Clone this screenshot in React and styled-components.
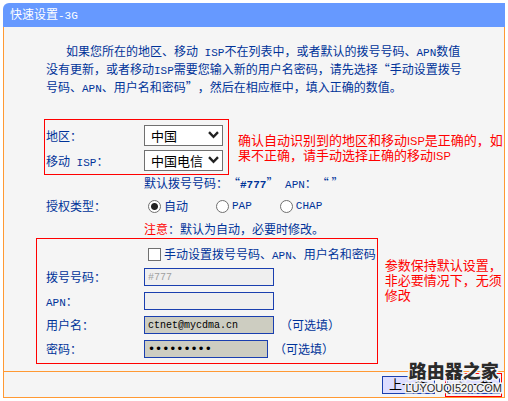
import React from "react";
import styled, { createGlobalStyle } from "styled-components";

function App() {
  return (
    <Panel lang="zh-CN">
      <GlobalStyle />
      <Header>
        快速设置<Latin>-3G</Latin>
      </Header>
      <Content>
        <Intro>
          如果您所在的地区、移动<Latin> ISP</Latin>
          不在列表中，或者默认的拨号号码、<Latin>APN</Latin>
          数值没有更新，或者移动<Latin>ISP</Latin>
          需要您输入新的用户名密码，请先选择“手动设置拨号号码、
          <Latin>APN</Latin>、用户名和密码”，然后在相应框中，填入正确的数值。
        </Intro>

        <Section>
          <RegionBox>
            <Row>
              <Label htmlFor="region">地区：</Label>
              <Dropdown id="region" options={["中国"]} />
            </Row>
            <Row>
              <Label htmlFor="isp">
                移动<Latin> ISP</Latin>：
              </Label>
              <Dropdown id="isp" options={["中国电信"]} />
            </Row>
          </RegionBox>
          <RegionNote>
            确认自动识别到的地区和移动<NoteLatin>ISP</NoteLatin>
            是正确的，如果不正确，请手动选择正确的移动<NoteLatin>ISP</NoteLatin>
          </RegionNote>
        </Section>

        <AuthRows>
          <Row>
            <Label as="span" />
            <Line>
              默认拨号号码：“
              <Latin as="b">#777</Latin>”<Latin> APN</Latin>：“ ”
            </Line>
          </Row>
          <Row role="radiogroup" aria-labelledby="auth">
            <Label as="span" id="auth">
              授权类型：
            </Label>
            <Choices>
              <Choice>
                <Radio name="auth" defaultChecked />
                <span>自动</span>
              </Choice>
              <Choice>
                <Radio name="auth" />
                <Latin>PAP</Latin>
              </Choice>
              <Choice>
                <Radio name="auth" />
                <Latin>CHAP</Latin>
              </Choice>
            </Choices>
          </Row>
          <Row>
            <Label as="span" />
            <Line>
              <Warn>注意</Warn>：默认为自动，必要时修改。
            </Line>
          </Row>
        </AuthRows>

        <Section>
          <DialBox>
            <Row>
              <Label as="span" />
              <Choices>
                <Choice>
                  <Checkbox />
                  <span>
                    手动设置拨号号码、<Latin>APN</Latin>、用户名和密码
                  </span>
                </Choice>
              </Choices>
            </Row>
            <Row>
              <Label htmlFor="dial">拨号号码：</Label>
              <TextInput id="dial" defaultValue="#777" disabled />
            </Row>
            <Row>
              <Label htmlFor="apn">
                <Latin>APN</Latin>：
              </Label>
              <TextInput id="apn" disabled />
            </Row>
            <Row>
              <Label htmlFor="user">用户名：</Label>
              <TextInput id="user" defaultValue="ctnet@mycdma.cn" />
              <Hint>（可选填）</Hint>
            </Row>
            <Row>
              <Label htmlFor="password">密码：</Label>
              <PasswordInput id="password" defaultValue="123456789" />
              <Hint>（可选填）</Hint>
            </Row>
          </DialBox>
          <DialNote>参数保持默认设置，非必要情况下，无须修改</DialNote>
        </Section>
      </Content>

      <Footer>
        <Button type="button">上一步</Button>
        <NextBox>
          <Button type="button">下一步</Button>
        </NextBox>
        <Watermark>
          <SiteName>路由器之家</SiteName>
          <SiteUrl>LUYOUQI520.COM</SiteUrl>
        </Watermark>
      </Footer>
    </Panel>
  );
}

function Dropdown({ id, options }) {
  return (
    <SelectWrap>
      <Select id={id}>
        {options.map((option) => (
          <option key={option}>{option}</option>
        ))}
      </Select>
      <Arrow viewBox="0 0 11 8" aria-hidden="true">
        <path d="M1 1.2 L5.5 5.8 L10 1.2" />
      </Arrow>
    </SelectWrap>
  );
}

const GlobalStyle = createGlobalStyle`
  * {
    box-sizing: border-box;
  }

  body {
    margin: 0;
    background: #ffffff;
    color: #003399;
    font-family: "Noto Sans CJK SC", sans-serif;
    font-size: 12px;
    line-height: 16px;
    text-spacing-trim: space-all;
  }
`;

const Panel = styled.main`
  margin: 3px;
`;

const Header = styled.h1`
  margin: 0;
  padding: 3px 7px 5px;
  border-top-left-radius: 6px;
  background: #6699ff;
  color: white;
  font-size: 12px;
  font-weight: 400;
  line-height: 16px;
`;

const Latin = styled.span`
  font-family: "Liberation Mono", monospace;
  font-size: 11px;
  line-height: 1;
  white-space: pre-wrap;
`;

const NoteLatin = styled.span`
  font-family: "Liberation Sans", sans-serif;
  font-size: 11px;
  line-height: 1;
`;

const Content = styled.form`
  padding: 15px 0 7px;
  border: 1px solid #ff9933;
  border-width: 0 1px;
  background: #f5f5f5;
`;

const Intro = styled.p`
  margin: 0 40px 23px 42px;
  line-height: 18px;
  text-indent: 20px;
`;

const Section = styled.div`
  display: flex;
`;

const RegionBox = styled.div`
  display: flex;
  flex-direction: column;
  flex-shrink: 0;
  gap: 4px;
  margin-left: 40px;
  padding: 5px 5px 3px 1px;
  border: 1px solid #ff0000;
`;

const Row = styled.div`
  display: flex;
  align-items: center;
`;

const Label = styled.label`
  flex-shrink: 0;
  width: 98px;
`;

const SelectWrap = styled.div`
  position: relative;
`;

const Select = styled.select`
  display: block;
  width: 79px;
  height: 21px;
  padding: 0 6px 2px;
  border: 1px solid #707070;
  border-radius: 0;
  appearance: none;
  background: white;
  color: black;
  font-family: inherit;
  font-size: 13px;
`;

const Arrow = styled.svg`
  position: absolute;
  top: 6px;
  right: 4px;
  width: 11px;
  height: 8px;
  fill: none;
  stroke: #222222;
  stroke-width: 2.4;
  pointer-events: none;
`;

const Note = styled.p`
  margin: 0;
  color: #ff0000;
  font-size: 13px;
  line-height: 15px;
`;

const RegionNote = styled(Note)`
  align-self: center;
  padding-left: 9px;
`;

const DialNote = styled(Note)`
  padding: 19px 0 0 7px;
`;

const AuthRows = styled.div`
  display: flex;
  flex-direction: column;
  gap: 7px;
  margin: 0 0 1px 42px;
`;

const Line = styled.span`
  white-space: nowrap;
`;

const Warn = styled.span`
  color: #ff0000;
`;

const Choices = styled.div`
  display: flex;
  gap: 28px;
  padding-left: 4px;
`;

const Choice = styled.label`
  display: flex;
  align-items: center;
  gap: 3px;
  height: 16px;
  white-space: nowrap;
`;

const Tick = styled.input`
  width: 13px;
  height: 13px;
  margin: 0;
  border: 1px solid #707070;
  appearance: none;
  background: white;
`;

const Radio = styled(Tick).attrs({ type: "radio" })`
  border-radius: 50%;

  &:checked {
    background: radial-gradient(circle, #222222 3px, white 4px);
  }
`;

const Checkbox = styled(Tick).attrs({ type: "checkbox" })`
  &:checked {
    background: #222222;
  }
`;

const DialBox = styled.div`
  display: flex;
  flex-direction: column;
  flex-shrink: 0;
  gap: 6px;
  margin-left: 32px;
  padding: 7px 1px 5px 9px;
  border: 1px solid #ff0000;
`;

const TextInput = styled.input`
  width: 130px;
  height: 18px;
  padding: 0 3px;
  border: 1px solid #1a3faf;
  background: #cdcdc1;
  color: black;
  font-family: "Liberation Mono", monospace;
  font-size: 10px;

  &:disabled {
    background: #efefef;
    color: #a0a0a0;
  }
`;

const PasswordInput = styled(TextInput).attrs({ type: "password" })`
  width: 124px;
  font-family: "DejaVu Sans", sans-serif;
  font-size: 12px;
`;

const Hint = styled.span`
  padding-left: 6px;
`;

const Footer = styled.footer`
  position: relative;
  display: flex;
  align-items: center;
  justify-content: flex-end;
  gap: 10px;
  padding: 1px 2px 0;
  border: 1px solid #ff9933;
  background: #f5f5f5;
`;

const Button = styled.button`
  display: block;
  height: 18px;
  padding: 0 6px 2px;
  border: 1px solid #1a3faf;
  background: #ddddff;
  color: black;
  font-family: inherit;
  font-size: 13px;
  line-height: 14px;
`;

const NextBox = styled.div`
  padding: 2px 1px;
  border: 1px solid #ff0000;
`;

const Watermark = styled.div`
  position: absolute;
  right: 2px;
  bottom: 2px;
  display: flex;
  flex-direction: column;
  align-items: center;
  color: #2b2b2b;
  paint-order: stroke fill;
  -webkit-text-stroke: 3px #f5f5f5;
  pointer-events: none;
`;

const SiteName = styled.strong`
  font-size: 18px;
  font-weight: 900;
  line-height: 22px;
`;

const SiteUrl = styled.span`
  font-family: "Liberation Sans", sans-serif;
  font-size: 11px;
  line-height: 14px;
`;

export default App;
